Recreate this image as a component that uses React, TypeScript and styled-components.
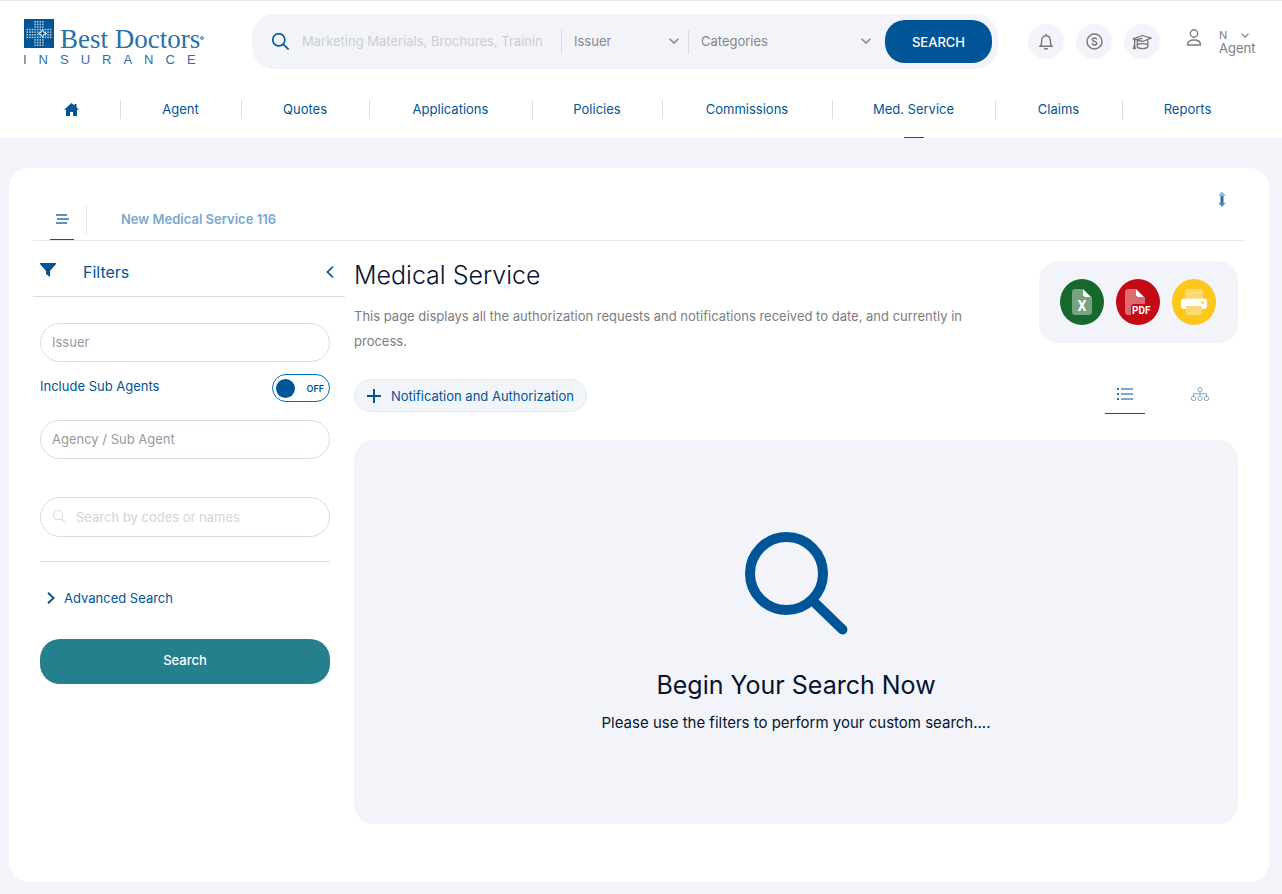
import React from "react";
import styled, { createGlobalStyle } from "styled-components";

const blue = "#005596";
const panel = "#f3f4f9";
const line = "#cfdfee";
const grey = "#7d7d80";

const GlobalStyle = createGlobalStyle`
  *, *::before, *::after { box-sizing: border-box; }
  body {
    margin: 0;
    background: ${panel};
    font-family: Inter, "Liberation Sans", sans-serif;
    font-size: 13px;
    line-height: 20px;
    color: ${blue};
  }
  button, input, select { font: inherit; color: inherit; }
  button { border: 0; background: none; padding: 0; cursor: pointer; }
  h1, h2, p { margin: 0; }
  a { color: inherit; text-decoration: none; }
  svg { display: block; flex: none; }
`;

const Page = styled.div`
  min-height: 100vh;
  display: flex;
  flex-direction: column;
`;

const Header = styled.header`
  background: #fff;
  border-top: 1px solid #e8e8ea;
`;

const TopBar = styled.div`
  display: flex;
  align-items: flex-start;
  padding: 13px 24px 0;
`;

const LogoLink = styled.a`
  display: block;
  width: 184px;
  margin: 5px 44px 0 0;
  flex: none;
`;

const SearchForm = styled.form`
  flex: 1;
  min-width: 0;
  display: flex;
  align-items: center;
  height: 55px;
  padding: 0 6px 0 20px;
  border-radius: 22px;
  background: ${panel};
`;

const KeywordInput = styled.input`
  flex: 1;
  min-width: 0;
  margin-left: 13px;
  padding: 0 0 1px;
  border: 0;
  outline: 0;
  background: none;
  &::placeholder { color: #cdced3; opacity: 1; }
`;

const Picker = styled.div<{ $width: number }>`
  display: flex;
  align-items: center;
  width: ${(p) => p.$width}px;
  height: 24px;
  padding: 0 9px 2px 12px;
  border-left: 1px solid #dcdde2;
  color: #85868e;
`;

const PickerSelect = styled.select`
  appearance: none;
  flex: 1;
  min-width: 0;
  padding: 0;
  border: 0;
  outline: 0;
  background: none;
`;

const SubmitButton = styled.button`
  width: 107px;
  height: 43px;
  margin-left: 5px;
  border-radius: 20px;
  background: ${blue};
  color: #fff;
  font-weight: 500;
`;

const Actions = styled.div`
  display: flex;
  gap: 12px;
  margin: 10px 26px 0 30px;
`;

const RoundButton = styled.button`
  display: grid;
  place-items: center;
  width: 36px;
  height: 35px;
  border-radius: 50%;
  background: ${panel};
  color: #77777a;
`;

const UserMenu = styled.button`
  display: flex;
  align-items: flex-start;
  gap: 17px;
  margin-top: 15px;
  color: ${grey};
  text-align: left;
`;

const UserText = styled.span`
  display: block;
  width: 39px;
  line-height: 13px;
`;

const UserInitial = styled.span`
  display: flex;
  align-items: center;
  justify-content: space-between;
  padding-right: 9px;
  font-size: 11px;
`;

const Nav = styled.nav`
  display: grid;
  grid-template-columns: 97fr 121fr 128fr 163fr 130fr 170fr 163fr 127fr 131fr;
  padding: 30px 28px 0 24px;
`;

const NavLink = styled.a<{ $active?: boolean }>`
  position: relative;
  display: flex;
  justify-content: center;
  height: 39px;
  padding-right: 2px;
  &::before {
    content: "";
    position: absolute;
    right: 0;
    top: 1px;
    height: 19px;
    border-right: 1px solid #dcdde0;
  }
  &:last-child::before { display: none; }
  &::after {
    content: "";
    display: ${(p) => (p.$active ? "block" : "none")};
    position: absolute;
    bottom: 0;
    width: 20px;
    height: 1px;
    background: ${blue};
  }
`;

const Card = styled.main`
  flex: 1;
  margin: 30px 13px 12px 9px;
  padding: 14px 24px 58px;
  border-radius: 20px;
  background: #fff;
`;

const CardTools = styled.div`
  display: flex;
  justify-content: flex-end;
  padding: 10px 19px 0 0;
  height: 24px;
`;

const Tabs = styled.div`
  display: flex;
  align-items: flex-start;
  height: 35px;
  border-bottom: 1px solid #e2ecf5;
`;

const MenuTab = styled.button`
  display: grid;
  place-items: center;
  width: 24px;
  height: 34px;
  margin: 0 12px 0 17px;
  padding-bottom: 7px;
  border-bottom: 1px solid ${blue};
`;

const ServiceTab = styled.button`
  height: 29px;
  padding: 0 34px 3px;
  border-left: 1px solid #e2e8ef;
  color: #7aa8cb;
  font-weight: 600;
`;

const Columns = styled.div`
  display: grid;
  grid-template-columns: 312px minmax(0, 1fr);
  column-gap: 9px;
`;

const Sidebar = styled.aside``;

const FiltersHead = styled.div`
  display: flex;
  align-items: center;
  height: 56px;
  padding: 6px 11px 0 7px;
  border-bottom: 1px solid #dadce0;
`;

const FiltersTitle = styled.h2`
  flex: 1;
  margin-left: 27px;
  font-size: 16px;
  font-weight: 400;
`;

const FilterForm = styled.form`
  display: flex;
  flex-direction: column;
  padding: 26px 15px 0 7px;
`;

const Field = styled.input`
  width: 100%;
  height: 39px;
  padding: 0 11px 2px;
  border: 1px solid ${line};
  border-radius: 20px;
  outline: 0;
  background: #fff;
  &::placeholder { color: #97989b; opacity: 1; }
`;

const SubAgentsRow = styled.label`
  display: flex;
  align-items: flex-start;
  justify-content: space-between;
  height: 28px;
  margin: 12px 0 18px;
  line-height: 25px;
`;

const Switch = styled.span`
  display: flex;
  align-items: center;
  justify-content: space-between;
  width: 58px;
  height: 28px;
  padding: 0 5px 0 3px;
  border: 1px solid #0070be;
  border-radius: 14px;
  font-size: 9px;
  font-weight: 600;
`;

const SwitchInput = styled.input`
  appearance: none;
  width: 19px;
  height: 19px;
  margin: 0;
  border-radius: 50%;
  background: ${blue};
`;

const CodeSearch = styled.div`
  display: flex;
  align-items: center;
  gap: 10px;
  height: 40px;
  margin: 38px 0 24px;
  padding: 0 12px 1px;
  border: 1px solid ${line};
  border-radius: 20px;
`;

const CodeInput = styled.input`
  flex: 1;
  min-width: 0;
  padding: 0;
  border: 0;
  outline: 0;
  &::placeholder { color: #d3d4d7; opacity: 1; }
`;

const Advanced = styled.button`
  display: flex;
  align-items: center;
  gap: 9px;
  padding: 26px 0 31px 7px;
  border-top: 1px solid ${line};
`;

const RunButton = styled.button`
  height: 45px;
  padding-bottom: 3px;
  border-radius: 20px;
  background: #24808c;
  color: #fff;
  font-weight: 500;
`;

const Content = styled.section`
  padding: 20px 7px 0 0;
`;

const Intro = styled.div`
  display: flex;
  justify-content: space-between;
  align-items: flex-start;
`;

const Title = styled.h1`
  margin-bottom: 14px;
  font-size: 25px;
  font-weight: 300;
  line-height: 29px;
  color: #06142f;
`;

const Description = styled.p`
  max-width: 648px;
  line-height: 25px;
  color: ${grey};
`;

const Exports = styled.div`
  display: flex;
  gap: 12px;
  padding: 18px 22px 18px 21px;
  border-radius: 20px;
  background: ${panel};
`;

const ExportButton = styled.button<{ $color: string }>`
  display: grid;
  place-items: center;
  width: 44px;
  height: 46px;
  border-radius: 50%;
  background: ${(p) => p.$color};
`;

const Toolbar = styled.div`
  display: flex;
  justify-content: space-between;
  margin: 25px 0 26px;
`;

const CreateButton = styled.button`
  display: flex;
  align-items: center;
  gap: 10px;
  height: 33px;
  padding: 0 12px;
  border: 1px solid #e1eaf4;
  border-radius: 17px;
  background: #f1f5fa;
`;

const Views = styled.div`
  display: flex;
  gap: 35px;
  margin-right: 18px;
`;

const ViewButton = styled.button<{ $active?: boolean }>`
  display: grid;
  place-items: center;
  width: 40px;
  height: 35px;
  padding-bottom: 4px;
  border-bottom: 1px solid ${(p) => (p.$active ? blue : "transparent")};
`;

const Empty = styled.div`
  display: flex;
  flex-direction: column;
  align-items: center;
  height: 384px;
  padding-top: 92px;
  border-radius: 20px;
  background: ${panel};
  color: #06142f;
`;

const EmptyTitle = styled.h2`
  margin: 34px 0 11px;
  font-size: 25px;
  font-weight: 400;
  line-height: 32px;
`;

const EmptyText = styled.p`
  font-size: 15px;
  line-height: 22px;
`;

const dots: [number, number][] = [];
for (let r = 0; r < 10; r++)
  for (let c = 0; c < 10; c++)
    if ((r > 2 && r < 7) || (c > 2 && c < 7)) dots.push([2.500 + c * 2.600, 2 + r * 2.600]);

const Logo = () => (
  <svg width="184" height="48" viewBox="0 0 184 48" role="img" aria-label="Best Doctors Insurance">
    <rect width="30" height="29" fill={blue} />
    {dots.map(([x, y]) => (
      <rect key={`${x}-${y}`} x={x} y={y} width="1.500" height="1.500" fill="#bcd5e8" />
    ))}
    <path d="M18.5 10.500l1.200 2.800 2.800 1.200-2.800 1.200-1.200 2.800-1.200-2.800-2.800-1.200 2.800-1.200z" fill={blue} stroke="#fff" />
    <text x="36" y="29" fontFamily="Liberation Serif, serif" fontSize="27" fill="#2a70a8">Best Doctors</text>
    <circle cx="178" cy="19" r="1.500" fill="#8fb5d3" stroke="#5c93be" />
    <text x="-1" y="45" fontFamily="Liberation Sans, sans-serif" fontSize="13" letterSpacing="12" fill="#2a70a8">INSURANCE</text>
  </svg>
);

const Lens = ({ size, width, color }: { size: number; width: number; color: string }) => (
  <svg width={size} height={size} viewBox="0 0 16 16" fill="none" stroke={color} strokeWidth={width}>
    <circle cx="6.4" cy="6.4" r="5.7" />
    <path d="M10.5 10.5l5.1 5.1" />
  </svg>
);

const Chevron = ({ dir, w, stroke = 1.5 }: { dir: "down" | "left" | "right"; w: number; stroke?: number }) =>
  dir === "down" ? (
    <svg width={w} height={w * 0.6} viewBox="0 0 10 6" fill="none" stroke="currentColor" strokeWidth={stroke}>
      <path d="M.6.7L5 5.1 9.4.7" />
    </svg>
  ) : (
    <svg width="8" height="12" viewBox="0 0 8 12" fill="none" stroke={blue} strokeWidth={stroke}>
      <path d={dir === "left" ? "M7 .7L1.4 6 7 11.3" : "M1 .7L6.6 6 1 11.3"} />
    </svg>
  );

const App = () => (
  <Page>
    <GlobalStyle />
    <Header>
      <TopBar>
        <LogoLink href="#"><Logo /></LogoLink>
        <SearchForm onSubmit={(e) => e.preventDefault()}>
          <Lens size={17} width={1.5} color={blue} />
          <KeywordInput aria-label="Keywords" placeholder="Marketing Materials, Brochures, Trainin" />
          <Picker $width={127}>
            <PickerSelect aria-label="Issuer"><option>Issuer</option></PickerSelect>
            <Chevron dir="down" w={10} />
          </Picker>
          <Picker $width={192}>
            <PickerSelect aria-label="Categories"><option>Categories</option></PickerSelect>
            <Chevron dir="down" w={10} />
          </Picker>
          <SubmitButton type="submit">SEARCH</SubmitButton>
        </SearchForm>
        <Actions>
          <RoundButton aria-label="Notifications">
            <svg width="14" height="16" viewBox="0 0 14 16" fill="none" stroke="currentColor" strokeWidth="1.4">
              <path d="M7 0v1.8M1 12.3c1.500-1.200 1.700-2.600 1.700-5.600C2.700 3.600 4.500 1.800 7 1.800s4.300 1.800 4.300 4.900c0 3 .2 4.400 1.700 5.600zM5.200 14.800h3.600" />
            </svg>
          </RoundButton>
          <RoundButton aria-label="Payments">
            <svg width="17" height="17" viewBox="0 0 17 17" fill="none" stroke="currentColor" strokeWidth="1.4">
              <circle cx="8.500" cy="8.500" r="7.500" />
              <path d="M10.800 6.500C10.500 5.500 9.700 5.100 8.500 5.100c-1.300 0-2.200.6-2.200 1.600 0 2.400 4.500 1.100 4.500 3.500 0 1.100-1 1.700-2.300 1.700-1.300 0-2.200-.6-2.400-1.700M8.500 3.900v1.200M8.500 11.900v1.200" />
            </svg>
          </RoundButton>
          <RoundButton aria-label="Training">
            <svg width="20" height="16" viewBox="0 0 20 16" fill="none" stroke="currentColor" strokeWidth="1.300" strokeLinejoin="round">
              <path d="M1 4.800L10.500 1.500l8.700 2.700-8.700 3.300zM10.500 4.400L2.700 6v4.700M2.600 10.700l-1.300 4h1.900zM5.600 6.800c-.6 2.400-.6 4.600-.2 6.600 2.600 1.600 7.600 1.600 10.200 0 .4-2 .4-4.600-.1-7.200M5.500 10.600c2.600-1 7.400-1 10 0" />
            </svg>
          </RoundButton>
        </Actions>
        <UserMenu aria-label="Account">
          <svg width="16" height="17" viewBox="0 0 16 17" fill="none" stroke="currentColor" strokeWidth="1.400">
            <circle cx="8" cy="4.500" r="3.700" />
            <path d="M1.500 16c0-3.600 2-5 6.500-5s6.500 1.400 6.500 5z" />
          </svg>
          <UserText>
            <UserInitial>N<Chevron dir="down" w={8} /></UserInitial>
            Agent
          </UserText>
        </UserMenu>
      </TopBar>
      <Nav>
        <NavLink href="#" aria-label="Home">
          <svg width="16" height="20" viewBox="0 0 16 20" fill={blue}>
            <path d="M7.500 4L0 10.800h2V17h4v-4h3v4h4v-6.200h2L12.500 8.300V5h-2v1.600z" />
          </svg>
        </NavLink>
        {["Agent", "Quotes", "Applications", "Policies", "Commissions", "Med. Service", "Claims", "Reports"].map((t) => (
          <NavLink key={t} href="#" $active={t === "Med. Service"}>{t}</NavLink>
        ))}
      </Nav>
    </Header>
    <Card>
      <CardTools>
        <button aria-label="Resize">
          <svg width="8" height="15" viewBox="0 0 8 15" fill="#4b8bbd">
            <path d="M4 0l3.500 4H5v7h2.500L4 15 .5 11H3V4H.5z" />
            <path d="M2.500 4h3v7h-3z" fill="#2a70a8" />
            <path d="M4 0l3.500 4h-7z" fill="#8fb8d8" />
          </svg>
        </button>
      </CardTools>
      <Tabs>
        <MenuTab aria-label="Menu">
          <svg width="14" height="10" viewBox="0 0 14 10" stroke="#2a70a8" strokeWidth="1.700">
            <path d="M1 1h11M2 5h12M1 9h11" />
          </svg>
        </MenuTab>
        <ServiceTab>New Medical Service 116</ServiceTab>
      </Tabs>
      <Columns>
        <Sidebar>
          <FiltersHead>
            <svg width="16" height="20" viewBox="0 0 16 20" fill={blue}>
              <path d="M.6 1h14.800c.7 0 .8.800.4 1.300L10 9v6L6 12V9L.2 2.300C-.2 1.800-.1 1 .6 1z" />
            </svg>
            <FiltersTitle>Filters</FiltersTitle>
            <button aria-label="Collapse filters"><Chevron dir="left" w={8} stroke={1.7} /></button>
          </FiltersHead>
          <FilterForm onSubmit={(e) => e.preventDefault()}>
            <Field aria-label="Issuer" placeholder="Issuer" />
            <SubAgentsRow>
              Include Sub Agents
              <Switch><SwitchInput type="checkbox" />OFF</Switch>
            </SubAgentsRow>
            <Field aria-label="Agency / Sub Agent" placeholder="Agency / Sub Agent" />
            <CodeSearch>
              <Lens size={13} width={1.3} color="#cfdfee" />
              <CodeInput aria-label="Search by codes or names" placeholder="Search by codes or names" />
            </CodeSearch>
            <Advanced type="button"><Chevron dir="right" w={8} stroke={1.9} />Advanced Search</Advanced>
            <RunButton type="submit">Search</RunButton>
          </FilterForm>
        </Sidebar>
        <Content>
          <Intro>
            <div>
              <Title>Medical Service</Title>
              <Description>
                This page displays all the authorization requests and notifications received to date, and currently in process.
              </Description>
            </div>
            <Exports>
              <ExportButton $color="#17682c" aria-label="Export to Excel">
                <svg width="20" height="26" viewBox="0 0 20 26">
                  <path d="M3 0h8v8h9v15a3 3 0 0 1-3 3H3a3 3 0 0 1-3-3V3a3 3 0 0 1 3-3z" fill="#74a480" />
                  <path d="M11 0l8 8h-6a2 2 0 0 1-2-2z" fill="#fff" />
                  <text x="10" y="22" textAnchor="middle" fontFamily="Roboto, sans-serif" fontSize="14" fontWeight="700" fill="#fff">X</text>
                </svg>
              </ExportButton>
              <ExportButton $color="#c30b15" aria-label="Export to PDF">
                <svg width="26" height="26" viewBox="0 0 26 26">
                  <path d="M3 0h8v8h9v7H9a3 3 0 0 0-3 3v8H3a3 3 0 0 1-3-3V3a3 3 0 0 1 3-3z" fill="#d96b71" />
                  <path d="M11 0l8 8h-6a2 2 0 0 1-2-2z" fill="#fff" />
                  <text x="7" y="25" fontFamily="Roboto, sans-serif" fontSize="10" fontWeight="700" fill="#fff">PDF</text>
                </svg>
              </ExportButton>
              <ExportButton $color="#ffc61c" aria-label="Print">
                <svg width="26" height="26" viewBox="0 0 26 26">
                  <path d="M4 9V4a4 4 0 0 1 4-4h10a4 4 0 0 1 4 4v5z" fill="#fbd974" />
                  <rect y="9.500" width="26" height="10.500" rx="3" fill="#fff" />
                  <path d="M5 17h16v6a3 3 0 0 1-3 3H8a3 3 0 0 1-3-3z" fill="#fbd974" />
                  <circle cx="21.700" cy="13.500" r="1.200" fill="#ffc61c" />
                </svg>
              </ExportButton>
            </Exports>
          </Intro>
          <Toolbar>
            <CreateButton>
              <svg width="14" height="14" viewBox="0 0 14 14" stroke={blue} strokeWidth="2"><path d="M7 0v14M0 7h14" /></svg>
              Notification and Authorization
            </CreateButton>
            <Views>
              <ViewButton $active aria-label="List view">
                <svg width="16" height="14" viewBox="0 0 16 14">
                  <path d="M0 1h2v2H0zM0 6h2v2H0zM0 11h2v2H0z" fill="#2a70a8" />
                  <path d="M4 1h12v2H4zM4 6h12v2H4zM4 11h12v2H4z" fill="#7aa8cf" />
                </svg>
              </ViewButton>
              <ViewButton aria-label="Tree view">
                <svg width="18" height="14" viewBox="0 0 18 14" fill="none" stroke="#7aa8cb">
                  <circle cx="9" cy="2.500" r="2" />
                  <path d="M9 4.500V9M2.500 9V6.800h13V9" />
                  <rect x=".5" y="9.500" width="4" height="4" rx="1.300" />
                  <rect x="7" y="9.500" width="4" height="4" rx="1.300" />
                  <rect x="13.500" y="9.500" width="4" height="4" rx="1.300" />
                </svg>
              </ViewButton>
            </Views>
          </Toolbar>
          <Empty>
            <svg width="104" height="103" viewBox="0 0 104 103" fill="none" stroke={blue} strokeWidth="10">
              <circle cx="42.500" cy="41.500" r="36.500" />
              <path d="M70 70l28.500 27.500" strokeLinecap="round" />
            </svg>
            <EmptyTitle>Begin Your Search Now</EmptyTitle>
            <EmptyText>Please use the filters to perform your custom search....</EmptyText>
          </Empty>
        </Content>
      </Columns>
    </Card>
  </Page>
);

export default App;
